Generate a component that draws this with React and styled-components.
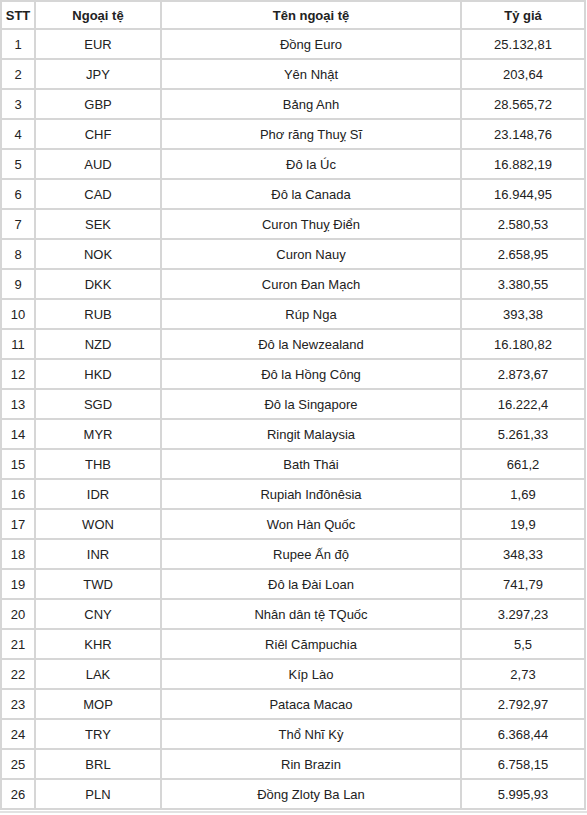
import React from 'react';
import styled, { createGlobalStyle } from 'styled-components';

const GlobalStyle = createGlobalStyle`
  body {
    margin: 0;
    background: #fff;
    font-family: "Liberation Sans", Arial, sans-serif;
  }
`;

const Table = styled.table`
  border-collapse: collapse;
  width: 584px;
  table-layout: fixed;
  font-size: 13px;
  color: #222;
`;

const Th = styled.th`
  border: 2px solid #d6d6d6;
  height: 25px;
  padding: 1px 0 0;
  font-weight: bold;
  text-align: center;
  width: ${(p) => p.w}px;
`;

const Td = styled.td`
  border: 2px solid #d6d6d6;
  height: 27px;
  padding: 1px 0 0;
  text-align: center;
`;

const Rule = styled.div`
  width: 587px;
  border-top: 2px solid #e2e2e2;
  margin-top: 1px;
`;

const rates = [
  ['EUR', 'Đồng Euro', '25.132,81'],
  ['JPY', 'Yên Nhật', '203,64'],
  ['GBP', 'Bảng Anh', '28.565,72'],
  ['CHF', 'Phơ răng Thuỵ Sĩ', '23.148,76'],
  ['AUD', 'Đô la Úc', '16.882,19'],
  ['CAD', 'Đô la Canada', '16.944,95'],
  ['SEK', 'Curon Thuỵ Điển', '2.580,53'],
  ['NOK', 'Curon Nauy', '2.658,95'],
  ['DKK', 'Curon Đan Mạch', '3.380,55'],
  ['RUB', 'Rúp Nga', '393,38'],
  ['NZD', 'Đô la Newzealand', '16.180,82'],
  ['HKD', 'Đô la Hồng Công', '2.873,67'],
  ['SGD', 'Đô la Singapore', '16.222,4'],
  ['MYR', 'Ringit Malaysia', '5.261,33'],
  ['THB', 'Bath Thái', '661,2'],
  ['IDR', 'Rupiah Inđônêsia', '1,69'],
  ['WON', 'Won Hàn Quốc', '19,9'],
  ['INR', 'Rupee Ấn độ', '348,33'],
  ['TWD', 'Đô la Đài Loan', '741,79'],
  ['CNY', 'Nhân dân tệ TQuốc', '3.297,23'],
  ['KHR', 'Riêl Cămpuchia', '5,5'],
  ['LAK', 'Kíp Lào', '2,73'],
  ['MOP', 'Pataca Macao', '2.792,97'],
  ['TRY', 'Thổ Nhĩ Kỳ', '6.368,44'],
  ['BRL', 'Rin Brazin', '6.758,15'],
  ['PLN', 'Đồng Zloty Ba Lan', '5.995,93'],
];

export default function App() {
  return (
    <>
      <GlobalStyle />
      <Table>
        <thead>
          <tr>
            <Th w={32}>STT</Th>
            <Th w={124}>Ngoại tệ</Th>
            <Th w={298}>Tên ngoại tệ</Th>
            <Th w={122}>Tỷ giá</Th>
          </tr>
        </thead>
        <tbody>
          {rates.map(([code, name, rate], i) => (
            <tr key={code}>
              <Td>{i + 1}</Td>
              <Td>{code}</Td>
              <Td>{name}</Td>
              <Td>{rate}</Td>
            </tr>
          ))}
        </tbody>
      </Table>
      <Rule />
    </>
  );
}
